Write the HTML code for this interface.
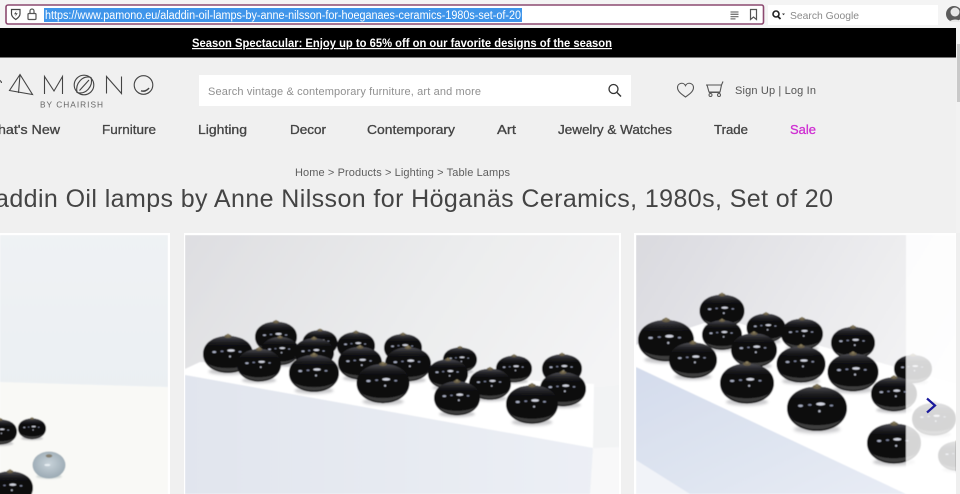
<!DOCTYPE html>
<html><head><meta charset="utf-8"><title>Pamono</title>
<style>
html,body{margin:0;padding:0;width:960px;height:494px;overflow:hidden;background:#f0f0f0}
svg{display:block;position:absolute;left:0;top:0}
text{font-family:"Liberation Sans",sans-serif}
</style></head><body>
<svg width="960" height="494" viewBox="0 0 960 494" xmlns="http://www.w3.org/2000/svg">
<defs>
<radialGradient id="bd" cx=".5" cy=".42" r=".62"><stop offset="0" stop-color="#0a0a0e"/><stop offset=".72" stop-color="#08080a"/><stop offset="1" stop-color="#262626"/></radialGradient>
<linearGradient id="gl" x1="0" y1="0" x2="0" y2="1"><stop offset="0" stop-color="#55555c" stop-opacity=".95"/><stop offset=".36" stop-color="#111" stop-opacity="0"/></linearGradient>
<radialGradient id="gy" cx=".5" cy=".45" r=".6"><stop offset="0" stop-color="#c8d3da"/><stop offset="1" stop-color="#97a6b0"/></radialGradient>
<linearGradient id="w2" x1="0" y1="0" x2="1" y2=".4"><stop offset="0" stop-color="#dedee1"/><stop offset=".6" stop-color="#ecedee"/><stop offset="1" stop-color="#f4f4f5"/></linearGradient>
<linearGradient id="f2" x1="0" y1="0" x2="1" y2="0"><stop offset="0" stop-color="#e1e5ee"/><stop offset="1" stop-color="#eceff5"/></linearGradient>
<linearGradient id="w3" x1="0" y1="0" x2="1" y2=".5"><stop offset="0" stop-color="#dadadf"/><stop offset="1" stop-color="#f6f6f7"/></linearGradient>
<linearGradient id="f3" x1="0" y1="0" x2="1" y2="1"><stop offset="0" stop-color="#d4dcec"/><stop offset="1" stop-color="#e8ecf5"/></linearGradient>
<linearGradient id="w1" x1="0" y1="0" x2="0" y2="1"><stop offset="0" stop-color="#eff2f4"/><stop offset="1" stop-color="#e8eef2"/></linearGradient>
<filter id="b" x="-5%" y="-5%" width="110%" height="110%"><feGaussianBlur stdDeviation=".55"/></filter>
<filter id="s" x="-40%" y="-40%" width="180%" height="180%"><feGaussianBlur stdDeviation="5"/></filter>
<g id="ball">
<ellipse cx="0" cy="74" rx="78" ry="14" fill="#8a8a90" opacity=".45" filter="url(#s)"/>
<path d="M-100 4C-100-42-55-68 0-68S100-42 100 4 55 80 0 80-100 50-100 4Z" fill="url(#bd)"/>
<path d="M-100 4C-100-42-55-68 0-68S100-42 100 4 55 80 0 80-100 50-100 4Z" fill="url(#gl)"/>
<path d="M-80 44C-40 66 40 66 80 44 45 84-45 84-80 44Z" fill="#3c3c3c"/>
<ellipse cx="0" cy="-67" rx="15" ry="7" fill="#6a6049"/><ellipse cx="0" cy="-72" rx="6" ry="5" fill="#857a5c"/>
<ellipse cx="-55" cy="-4" rx="8" ry="4" fill="#aab0c4"/><ellipse cx="-24" cy="-7" rx="6" ry="3" fill="#7f86a0"/><ellipse cx="12" cy="-10" rx="15" ry="5" fill="#d4d7e2"/><ellipse cx="48" cy="-5" rx="6" ry="3" fill="#8d94ac"/><ellipse cx="8" cy="14" rx="4" ry="4" fill="#b8bcca"/>
</g>
<g id="gball">
<ellipse cx="0" cy="70" rx="78" ry="14" fill="#9aa" opacity=".4" filter="url(#s)"/>
<ellipse rx="100" ry="82" fill="url(#gy)"/><ellipse cx="0" cy="-55" rx="20" ry="10" fill="#857f70"/><ellipse cx="-10" cy="0" rx="18" ry="7" fill="#e6edf2"/>
</g>
<clipPath id="c1"><rect x="0" y="235" width="168" height="259"/></clipPath>
<clipPath id="c2"><rect x="185" y="235" width="434" height="259"/></clipPath>
<clipPath id="c3"><rect x="636" y="235" width="320" height="259"/></clipPath>
</defs>

<!-- browser chrome -->
<rect width="960" height="28" fill="#f4f4f4"/>
<rect x="6" y="5" width="757.5" height="19" rx="2" fill="#fff" stroke="#8c4a70" stroke-width="1.6"/>
<path d="M11.500 9.500h8.500v4.500c0 2.500-2 4-4.250 5.500-2.250-1.500-4.250-3-4.250-5.500Z" fill="none" stroke="#444" stroke-width="1.200"/>
<path d="M16.500 11l-2.500 3.300h2l-.8 2.300 2.500-3.300h-2Z" fill="#444"/>
<rect x="28" y="13.500" width="8" height="6" rx="1" fill="none" stroke="#555" stroke-width="1.200"/>
<path d="M30 13.500v-2.500a2 2 0 0 1 4 0v2.500" fill="none" stroke="#555" stroke-width="1.200"/>
<rect x="44" y="8" width="478" height="14" fill="#3f95ea"/>
<text x="45" y="19" font-size="11.500" fill="#fff" textLength="476" lengthAdjust="spacingAndGlyphs">https://www.pamono.eu/aladdin-oil-lamps-by-anne-nilsson-for-hoeganaes-ceramics-1980s-set-of-20</text>
<path d="M730.500 12h8M730.500 14.300h8M730.500 16.600h8M730.500 18.900h5" stroke="#777" stroke-width="1.300"/>
<path d="M750.500 9.500h6v10l-3-2.500-3 2.500Z" fill="none" stroke="#555" stroke-width="1.200"/>
<rect x="768" y="5" width="170" height="20" fill="#fff"/>
<circle cx="776" cy="14" r="3" fill="none" stroke="#222" stroke-width="1.600"/><path d="M778 16.500l2.500 2.500" stroke="#222" stroke-width="1.800"/><path d="M782 13.500h3l-1.500 1.800Z" fill="#333"/>
<text x="790" y="19" font-size="10.500" fill="#8a8a8a" textLength="69" lengthAdjust="spacingAndGlyphs">Search Google</text>
<circle cx="954" cy="14" r="8" fill="#5c5c5c"/><circle cx="955" cy="12" r="4.500" fill="#e8e8e8"/><path d="M949 22a7 5 0 0 1 11-1v1Z" fill="#e8e8e8"/>

<!-- black promo bar -->
<rect y="28" width="956" height="29" fill="#000"/>
<rect y="57" width="956" height="1" fill="#777"/>
<text x="192" y="47" font-size="12" font-weight="700" fill="#fff" text-decoration="underline" textLength="420" lengthAdjust="spacingAndGlyphs">Season Spectacular: Enjoy up to 65% off on our favorite designs of the season</text>

<!-- scrollbar -->
<rect x="956" y="28" width="4" height="466" fill="#f2f2f2"/>
<rect x="957" y="44" width="3" height="58" fill="#c9c9c9"/>

<!-- logo -->
<g fill="none" stroke="#444" stroke-width="1.100">
<path d="M-3 80a3.500 3.500 0 0 1 4.500 3"/>
<path d="M20 74.500L9.500 90.500 32.500 94.500Z M20 74.500L18.500 93"/>
<path d="M44.500 94V76.500L54 91l8.500-14.500V94"/>
<circle cx="84" cy="85" r="9.800"/><path d="M77 92.500C75 83 83 75 91 77.500 93.500 86 86 95 77 92.500ZM79.500 90.500L89 80"/>
<path d="M106.500 93.500V76.500L121.500 93.500V76.500"/>
<circle cx="143.500" cy="85" r="9.300"/><path d="M141 90.800a7 7 0 0 0 8-2.800" stroke-width="1.500"/>
</g>
<text x="40" y="107.500" font-size="8.300" fill="#666" textLength="63" lengthAdjust="spacing">BY CHAIRISH</text>

<!-- search -->
<rect x="199" y="75" width="432" height="31" fill="#fff"/>
<text x="208" y="95" font-size="11" fill="#909090" textLength="273" lengthAdjust="spacing">Search vintage &amp; contemporary furniture, art and more</text>
<circle cx="613.500" cy="89" r="4.500" fill="none" stroke="#333" stroke-width="1.300"/><path d="M617 92.500l4 4" stroke="#333" stroke-width="1.400"/>

<!-- user icons -->
<path d="M685.500 97c-5-3.500-8-6-8-9.500a4.200 4.200 0 0 1 8-1.800 4.200 4.200 0 0 1 8 1.800c0 3.500-3 6-8 9.500Z" fill="none" stroke="#555" stroke-width="1.100"/>
<path d="M706 85h15.500l1.500-3.500M707 85l2 7h11l1.500-7M709 92.500h11" fill="none" stroke="#555" stroke-width="1.100"/><circle cx="710.500" cy="95" r="1.500" fill="none" stroke="#555"/><circle cx="719" cy="95" r="1.500" fill="none" stroke="#555"/>
<text x="735" y="94" font-size="11" fill="#555" textLength="81" lengthAdjust="spacing">Sign Up | Log In</text>

<!-- nav -->
<g font-size="12.500" fill="#444" stroke="#444" stroke-width=".3">
<text x="-2" y="134" textLength="62" lengthAdjust="spacingAndGlyphs">hat's New</text>
<text x="102" y="134" textLength="54" lengthAdjust="spacingAndGlyphs">Furniture</text>
<text x="198" y="134" textLength="49" lengthAdjust="spacingAndGlyphs">Lighting</text>
<text x="290" y="134" textLength="36" lengthAdjust="spacingAndGlyphs">Decor</text>
<text x="367" y="134" textLength="88" lengthAdjust="spacingAndGlyphs">Contemporary</text>
<text x="497" y="134" textLength="19" lengthAdjust="spacingAndGlyphs">Art</text>
<text x="558" y="134" textLength="114" lengthAdjust="spacingAndGlyphs">Jewelry &amp; Watches</text>
<text x="714" y="134" textLength="34" lengthAdjust="spacingAndGlyphs">Trade</text>
<text x="790" y="134" textLength="26" lengthAdjust="spacingAndGlyphs" fill="#cf2fd2" stroke="#cf2fd2">Sale</text>
</g>
<text x="295" y="176" font-size="11" fill="#5e5e5e" textLength="215" lengthAdjust="spacing">Home &gt; Products &gt; Lighting &gt; Table Lamps</text>
<text x="-28" y="207" font-size="25" fill="#444" textLength="861" lengthAdjust="spacing">Aladdin Oil lamps by Anne Nilsson for Höganäs Ceramics, 1980s, Set of 20</text>

<!-- card frames -->
<rect x="-2" y="233" width="172" height="261" fill="#fff"/>
<rect x="184" y="233" width="437" height="261" fill="#fff"/>
<rect x="634" y="233" width="322" height="261" fill="#fff"/>

<!-- image 1 -->
<g clip-path="url(#c1)" filter="url(#b)">
<rect y="235" width="168" height="259" fill="url(#w1)"/>
<path d="M0 382L168 387V494H0Z" fill="#f9f9f6"/>
<use href="#ball" transform="translate(0 431) scale(.17)"/>
<use href="#ball" transform="translate(32 428) scale(.14)"/>
<use href="#gball" transform="translate(49 465) scale(.165)"/>
<use href="#ball" transform="translate(10 487) scale(.23)"/>
</g>

<!-- image 2 -->
<g clip-path="url(#c2)" filter="url(#b)">
<rect x="185" y="235" width="435" height="259" fill="url(#w2)"/>
<path d="M185 371L600 387 620 385V494H185Z" fill="#f2f3f4"/>
<path d="M185 369L200 362 594 384 593 448 185 375Z" fill="#fff"/>
<path d="M185 375L593 448 590 494H185Z" fill="url(#f2)"/>
<path d="M590 494L593 448 620 447V494Z" fill="#f8f8f9"/>
<use href="#ball" transform="translate(276 336) scale(.21)"/>
<use href="#ball" transform="translate(320 342) scale(.175)"/>
<use href="#ball" transform="translate(356 345) scale(.19)"/>
<use href="#ball" transform="translate(403 347) scale(.19)"/>
<use href="#ball" transform="translate(228 353) scale(.25)"/>
<use href="#ball" transform="translate(280 350) scale(.19)"/>
<use href="#ball" transform="translate(314 352) scale(.2)"/>
<use href="#ball" transform="translate(460 359) scale(.17)"/>
<use href="#ball" transform="translate(360 362) scale(.22)"/>
<use href="#ball" transform="translate(408 363) scale(.23)"/>
<use href="#ball" transform="translate(259 364) scale(.22)"/>
<use href="#ball" transform="translate(514 368) scale(.18)"/>
<use href="#ball" transform="translate(562 368) scale(.2)"/>
<use href="#ball" transform="translate(314 372) scale(.25)"/>
<use href="#ball" transform="translate(448 373) scale(.2)"/>
<use href="#ball" transform="translate(490 383) scale(.21)"/>
<use href="#ball" transform="translate(383 382) scale(.265)"/>
<use href="#ball" transform="translate(563 388) scale(.23)"/>
<use href="#ball" transform="translate(457 397) scale(.23)"/>
<use href="#ball" transform="translate(532 403) scale(.26)"/>
</g>

<!-- image 3 -->
<g clip-path="url(#c3)" filter="url(#b)">
<rect x="636" y="235" width="320" height="259" fill="url(#w3)"/>
<path d="M636 345L720 318 960 385V494H636Z" fill="#fff"/>
<path d="M636 367L906 494H636Z" fill="url(#f3)"/>
<path d="M636 460L690 494H636Z" fill="#f1f3f8"/>
<use href="#ball" transform="translate(722 310) scale(.225)"/>
<use href="#ball" transform="translate(766 327) scale(.195)"/>
<use href="#ball" transform="translate(722 334) scale(.2)"/>
<use href="#ball" transform="translate(802 333) scale(.21)"/>
<use href="#ball" transform="translate(666 339) scale(.28)"/>
<use href="#ball" transform="translate(853 342) scale(.22)"/>
<use href="#ball" transform="translate(754 349) scale(.23)"/>
<use href="#ball" transform="translate(693 359) scale(.24)"/>
<use href="#ball" transform="translate(801 363) scale(.245)"/>
<use href="#ball" transform="translate(913 368) scale(.19)"/>
<use href="#ball" transform="translate(853 371) scale(.255)"/>
<use href="#ball" transform="translate(747 382) scale(.27)"/>
<use href="#ball" transform="translate(894 393) scale(.23)"/>
<use href="#ball" transform="translate(817 407) scale(.3)"/>
<use href="#ball" transform="translate(934 418) scale(.22)"/>
<use href="#ball" transform="translate(894 442) scale(.27)"/>
<use href="#ball" transform="translate(958 455) scale(.2)"/>
<rect x="906" y="235" width="50" height="259" fill="#fff" opacity=".83"/>
</g>
<path d="M927 398.500L935 405.500 927 412.500" fill="none" stroke="#1a1a9c" stroke-width="2.200"/>
<rect x="956" y="233" width="4" height="261" fill="#efefef"/>
</svg>
</body></html>
